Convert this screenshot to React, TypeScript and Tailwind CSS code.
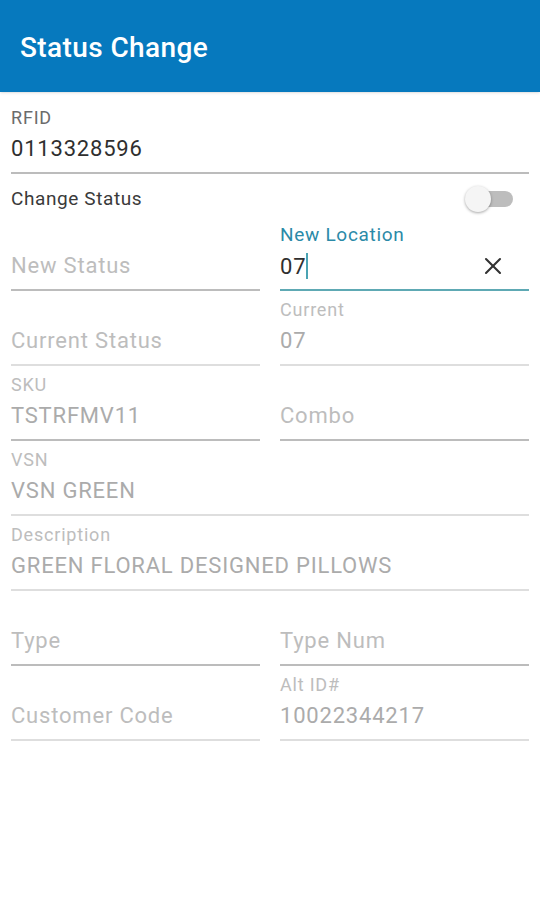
import { X } from "lucide-react";

interface FieldProps {
    label?: string
    value?: string
    hint?: string
    dark?: boolean
    strong?: boolean
    className?: string
}

function Field(props: FieldProps) {
    return (
        <div className={`flex flex-col ${props.className ?? ""}`}>
            <div className={`h-[22px] leading-[22px] text-[18px] tracking-[0.8px] ${props.dark ? "text-[#6b6b6b]" : "text-[#bdbdbd]"}`}>
                {props.label}
            </div>
            <div className={`mt-1 h-[32px] leading-[32px] text-[22px] tracking-[0.8px] ${props.value ? (props.dark ? "text-[#2f2f2f]" : "text-[#ababab]") : "text-[#bdbdbd]"}`}>
                {props.value ?? props.hint}
            </div>
            <div className={`mt-[7px] h-[2px] ${props.strong ? "bg-[#bcbcbc]" : "bg-[#dedede]"}`}></div>
        </div>
    );
}

export default function App() {
    return (
        <div className="w-[540px] h-[900px] bg-white font-['Roboto',sans-serif]">
            <div className="h-[92px] bg-[#0679be] flex items-center px-5 pt-1 shadow-sm">
                <h1 className="text-white text-[28px] font-medium tracking-[0.4px]">Status Change</h1>
            </div>

            <div className="px-[11px] pt-[15px]">
                <Field label="RFID" value="0113328596" dark strong />

                <div className="h-[50px] flex items-center justify-between">
                    <span className="text-[19px] tracking-[0.6px] text-[#3a3a3a]">Change Status</span>
                    <div className="relative w-[50px] h-[26px] mr-[14px] flex items-center">
                        <div className="w-[36px] h-[16px] rounded-full bg-[#bdbdbd] ml-[12px]"></div>
                        <div className="absolute left-0 w-[26px] h-[26px] rounded-full bg-[#f5f5f5] shadow-[0_1px_3px_rgba(0,0,0,0.35)]"></div>
                    </div>
                </div>

                <div className="grid grid-cols-2 gap-x-5 gap-y-2">
                    <Field hint="New Status" strong />
                    <div className="flex flex-col">
                        <div className="h-[22px] leading-[22px] text-[19px] tracking-[0.7px] text-[#2b8aa8]">New Location</div>
                        <div className="mt-1 h-[32px] flex items-center justify-between">
                            <div className="flex items-center text-[22px] tracking-[0.8px] text-[#2f2f2f]">
                                07<span className="w-[2px] h-[26px] bg-[#4aa3b3]"></span>
                            </div>
                            <X className="w-7 h-7 mr-[22px] text-[#333]" strokeWidth={1.8} />
                        </div>
                        <div className="mt-[7px] h-[2px] bg-[#5ea9b4]"></div>
                    </div>

                    <Field hint="Current Status" />
                    <Field label="Current" value="07" />

                    <Field label="SKU" value="TSTRFMV11" strong />
                    <Field hint="Combo" strong />

                    <Field label="VSN" value="VSN GREEN" className="col-span-2" />
                    <Field label="Description" value="GREEN FLORAL DESIGNED PILLOWS" className="col-span-2" />

                    <Field hint="Type" strong />
                    <Field hint="Type Num" strong />

                    <Field hint="Customer Code" />
                    <Field label="Alt ID#" value="10022344217" />
                </div>
            </div>
        </div>
    );
}
